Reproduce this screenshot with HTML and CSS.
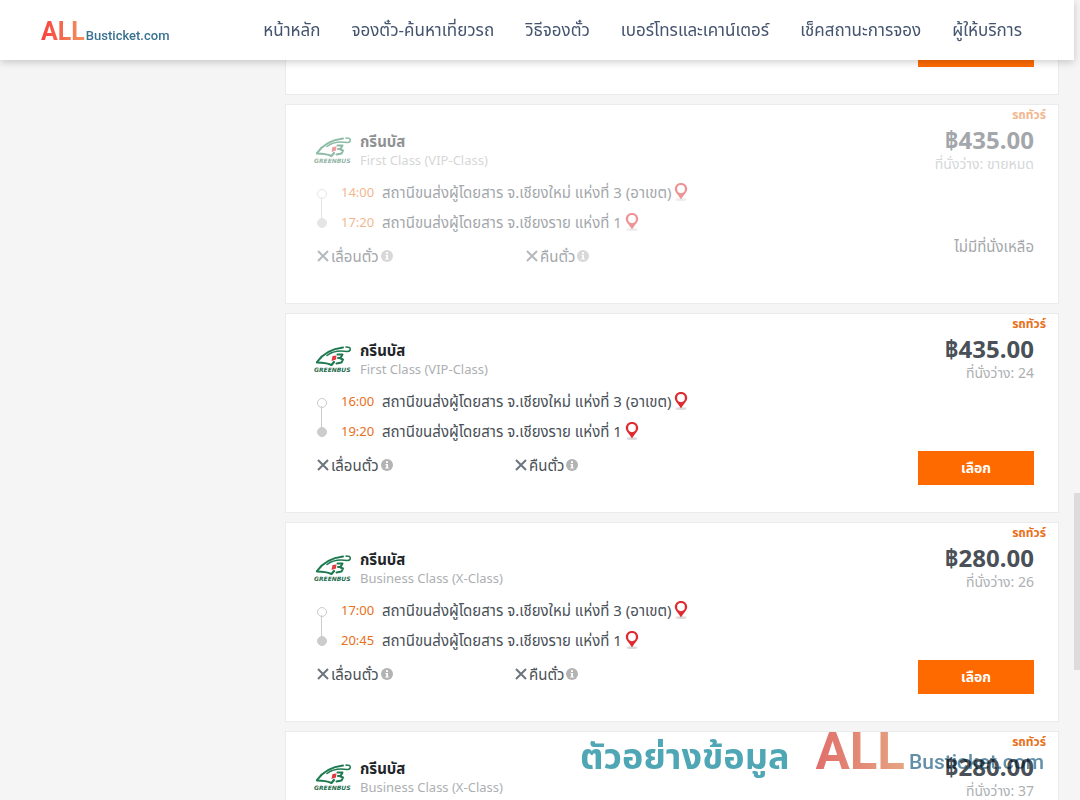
FILE: index.html
```html
<!DOCTYPE html>
<html lang="th">

<head>
    <meta charset="UTF-8">
    <meta name="viewport" content="width=device-width, initial-scale=1.0">
    <title>ALL Busticket.com</title>
    <link rel="stylesheet" href="styles.css">
</head>

<body>

    <!-- shared icons -->
    <svg class="sprite" aria-hidden="true">
        <symbol id="greenbus" viewBox="0 0 38 28">
            <g fill="none" stroke="#1d7a50" stroke-linecap="round" stroke-linejoin="round">
                <path stroke-width="2" d="M3 17C8 10 16 4 29 2.500"/>
                <path stroke-width="2.200" d="M3 17.500C8 17.500 13 18 17.500 20L20 17"/>
                <path stroke-width="1.600" d="M13 10.500C18 6.500 26 5.500 33 6.500C36.500 6.500 37 4 35.500 2.500L32 2"/>
                <path stroke-width="2" d="M23.500 9.500H28.500L26.500 13H24M26.500 13.500L29 14.500L27.500 17.500L22.500 18.500"/>
            </g>
            <path fill="#e23a3f" d="M18.500 11L22.500 10.500L22 14.500L17.500 16Z"/>
            <text x="0" y="27" class="greenbus-text">GREENBUS</text>
        </symbol>
        <symbol id="pin" viewBox="0 0 14 18">
            <ellipse cx="7" cy="16.500" rx="5.500" ry="1.500" fill="#ddd"/>
            <path fill="#df2a2f" fill-rule="evenodd" d="M7 0C3.200 0 .8 2.700 .8 6C.8 9.500 5 12.500 7 16.500C9 12.500 13.200 9.500 13.200 6C13.200 2.700 10.800 0 7 0ZM7 2A3.900 4.100 0 1 1 7 10.200A3.900 4.100 0 1 1 7 2Z"/>
        </symbol>
        <symbol id="cross" viewBox="0 0 12 12">
            <path d="M1 1L11 11M11 1L1 11" stroke="#6c757d" stroke-width="2"/>
        </symbol>
        <symbol id="info" viewBox="0 0 12 12">
            <circle cx="6" cy="6" r="6" fill="#b3b3b3"/>
            <path d="M5 2.200H7V4H5ZM4.500 5H7V8.500H7.800V9.600H4.300V8.500H5.200V6H4.500Z" fill="#fff"/>
        </symbol>
    </svg>

    <header class="header">
        <a class="logo" href="#"><span class="logo-all">ALL</span><span class="logo-name">Busticket.com</span></a>
        <nav class="nav">
            <a href="#">หน้าหลัก</a>
            <a href="#">จองตั๋ว-ค้นหาเที่ยวรถ</a>
            <a href="#">วิธีจองตั๋ว</a>
            <a href="#">เบอร์โทรและเคาน์เตอร์</a>
            <a href="#">เช็คสถานะการจอง</a>
            <a href="#">ผู้ให้บริการ</a>
        </nav>
    </header>

    <main class="results">
        <article class="card card-end">
            <button type="button" class="select">เลือก</button>
        </article>

        <article class="card sold-out">
            <div class="trip">
                <div class="company">
                    <svg class="company-logo"><use href="#greenbus"/></svg>
                    <div>
                        <h2>กรีนบัส</h2>
                        <p class="class">First Class (VIP-Class)</p>
                    </div>
                </div>
                <ul class="stops">
                    <li><span class="time">14:00</span>สถานีขนส่งผู้โดยสาร จ.เชียงใหม่ แห่งที่ 3 (อาเขต)<svg class="pin"><use href="#pin"/></svg></li>
                    <li><span class="time">17:20</span>สถานีขนส่งผู้โดยสาร จ.เชียงราย แห่งที่ 1<svg class="pin"><use href="#pin"/></svg></li>
                </ul>
                <div class="options">
                    <span class="option"><svg><use href="#cross"/></svg>เลื่อนตั๋ว<svg><use href="#info"/></svg></span>
                    <span class="option"><svg><use href="#cross"/></svg>คืนตั๋ว<svg><use href="#info"/></svg></span>
                </div>
            </div>
            <div class="booking">
                <span class="type">รถทัวร์</span>
                <strong class="price">฿435.00</strong>
                <span class="seats">ที่นั่งว่าง: ขายหมด</span>
                <span class="no-seats">ไม่มีที่นั่งเหลือ</span>
            </div>
        </article>

        <article class="card">
            <div class="trip">
                <div class="company">
                    <svg class="company-logo"><use href="#greenbus"/></svg>
                    <div>
                        <h2>กรีนบัส</h2>
                        <p class="class">First Class (VIP-Class)</p>
                    </div>
                </div>
                <ul class="stops">
                    <li><span class="time">16:00</span>สถานีขนส่งผู้โดยสาร จ.เชียงใหม่ แห่งที่ 3 (อาเขต)<svg class="pin"><use href="#pin"/></svg></li>
                    <li><span class="time">19:20</span>สถานีขนส่งผู้โดยสาร จ.เชียงราย แห่งที่ 1<svg class="pin"><use href="#pin"/></svg></li>
                </ul>
                <div class="options">
                    <span class="option"><svg><use href="#cross"/></svg>เลื่อนตั๋ว<svg><use href="#info"/></svg></span>
                    <span class="option"><svg><use href="#cross"/></svg>คืนตั๋ว<svg><use href="#info"/></svg></span>
                </div>
            </div>
            <div class="booking">
                <span class="type">รถทัวร์</span>
                <strong class="price">฿435.00</strong>
                <span class="seats">ที่นั่งว่าง: 24</span>
                <button type="button" class="select">เลือก</button>
            </div>
        </article>

        <article class="card">
            <div class="trip">
                <div class="company">
                    <svg class="company-logo"><use href="#greenbus"/></svg>
                    <div>
                        <h2>กรีนบัส</h2>
                        <p class="class">Business Class (X-Class)</p>
                    </div>
                </div>
                <ul class="stops">
                    <li><span class="time">17:00</span>สถานีขนส่งผู้โดยสาร จ.เชียงใหม่ แห่งที่ 3 (อาเขต)<svg class="pin"><use href="#pin"/></svg></li>
                    <li><span class="time">20:45</span>สถานีขนส่งผู้โดยสาร จ.เชียงราย แห่งที่ 1<svg class="pin"><use href="#pin"/></svg></li>
                </ul>
                <div class="options">
                    <span class="option"><svg><use href="#cross"/></svg>เลื่อนตั๋ว<svg><use href="#info"/></svg></span>
                    <span class="option"><svg><use href="#cross"/></svg>คืนตั๋ว<svg><use href="#info"/></svg></span>
                </div>
            </div>
            <div class="booking">
                <span class="type">รถทัวร์</span>
                <strong class="price">฿280.00</strong>
                <span class="seats">ที่นั่งว่าง: 26</span>
                <button type="button" class="select">เลือก</button>
            </div>
        </article>

        <article class="card">
            <div class="trip">
                <div class="company">
                    <svg class="company-logo"><use href="#greenbus"/></svg>
                    <div>
                        <h2>กรีนบัส</h2>
                        <p class="class">Business Class (X-Class)</p>
                    </div>
                </div>
            </div>
            <div class="booking">
                <span class="type">รถทัวร์</span>
                <strong class="price">฿280.00</strong>
                <span class="seats">ที่นั่งว่าง: 37</span>
            </div>
        </article>
    </main>

    <div class="watermark">
        <span class="watermark-text">ตัวอย่างข้อมูล</span>
        <span class="logo-all">ALL</span>
        <span class="logo-name">Busticket.com</span>
    </div>

    <div class="scroll-thumb"></div>

</body>

</html>
```
FILE: styles.css
```css
* {
    box-sizing: border-box;
}

body {
    margin: 0;
    height: 100vh;
    overflow: hidden;
    padding-right: 6px;
    font-family: "Noto Sans", "Noto Sans Thai", sans-serif;
    font-size: 15px;
    line-height: 20px;
    color: #495057;
    background-color: #f5f5f5;
}

h2,
p,
ul {
    margin: 0;
    padding: 0;
}

.sprite {
    display: none;
}

/* header */
.header {
    position: fixed;
    top: 0;
    left: 0;
    right: 6px;
    z-index: 10;
    display: flex;
    align-items: center;
    justify-content: space-between;
    height: 60px;
    padding: 0 52px 0 41px;
    background-color: #fff;
    box-shadow: 0 2px 8px rgba(0, 0, 0, 0.2);
}

.logo {
    display: flex;
    align-items: baseline;
    gap: 1px;
    padding-top: 3px;
    font-family: Roboto, sans-serif;
    font-weight: bold;
    text-decoration: none;
}

.logo-all {
    font-size: 25px;
    line-height: 30px;
    color: transparent;
    background: linear-gradient(90deg, #f8423c, #f29460);
    background-clip: text;
    -webkit-background-clip: text;
}

.logo-name {
    font-size: 13px;
    font-weight: 500;
    color: #3a7291;
}

.nav {
    display: flex;
    gap: 31px;
}

.nav a {
    font-size: 17px;
    color: #44546f;
    text-decoration: none;
    white-space: nowrap;
}

/* results */
.results {
    display: flex;
    flex-direction: column;
    gap: 9px;
    padding: 32px 15px 0 285px;
}

.card {
    display: flex;
    justify-content: space-between;
    min-height: 200px;
    padding: 0 24px 0 28px;
    background-color: #fff;
    border: 1px solid #e9ebec;
    flex-shrink: 0;
}

.card-end {
    justify-content: flex-end;
    min-height: 0;
    padding-bottom: 27px;
}

.trip {
    padding-top: 26px;
}

.company {
    display: flex;
    align-items: center;
    gap: 8px;
}

.company-logo {
    width: 38px;
    height: 28px;
}

.greenbus-text {
    font: italic bold 6px "DejaVu Sans", sans-serif;
    fill: #1d6b4a;
}

.company h2 {
    font-size: 15px;
    line-height: 20px;
    color: #212529;
}

.class {
    font-size: 13px;
    line-height: 18px;
    color: #adb0b3;
}

.seats {
    font-size: 14px;
    line-height: 18px;
    color: #adb0b3;
}

.stops {
    position: relative;
    margin-top: 8px;
    list-style: none;
}

/* line between the two stops */
.stops::before {
    content: "";
    position: absolute;
    top: 20px;
    left: 7px;
    height: 24px;
    border-left: 1px solid #ccc;
}

.stops li {
    display: flex;
    align-items: center;
    height: 30px;
    white-space: nowrap;
}

.stops li::before {
    content: "";
    width: 8px;
    height: 8px;
    margin: 4px 14px 0 3px;
    border: 1px solid #ccc;
    border-radius: 50%;
}

.stops li:last-child::before {
    margin-top: 2px;
    background-color: #ccc;
}

.time {
    width: 41px;
    font-size: 13px;
    color: #e8701a;
}

.pin {
    width: 14px;
    height: 18px;
    margin-left: 3px;
}

.options {
    display: flex;
    margin-top: 9px;
    padding-left: 3px;
}

.option {
    display: flex;
    align-items: center;
    gap: 2px;
    width: 198px;
}

.option svg {
    width: 12px;
    height: 12px;
}

.booking {
    display: flex;
    flex-direction: column;
    align-items: flex-end;
}

.type {
    margin-right: -12px;
    font-size: 12px;
    line-height: 20px;
    font-weight: bold;
    color: #e8701a;
}

.price {
    font-size: 24px;
    line-height: 30px;
}

.select {
    width: 116px;
    height: 34px;
    padding: 0;
    font: inherit;
    font-size: 14px;
    font-weight: bold;
    color: #fff;
    background-color: #ff6a00;
    border: 0;
}

.booking .select {
    margin-top: 69px;
}

.no-seats {
    margin-top: 63px;
}

.sold-out > div {
    opacity: 0.5;
}

.sold-out .option {
    width: 209px;
}

/* watermark over the page corner */
.watermark {
    position: fixed;
    right: 36px;
    bottom: 18px;
    display: flex;
    align-items: baseline;
    opacity: 0.8;
    mix-blend-mode: multiply;
    font-family: Roboto, sans-serif;
    font-weight: bold;
    pointer-events: none;
}

.watermark-text {
    margin-right: 26px;
    font-family: "Noto Sans", "Noto Sans Thai", sans-serif;
    font-size: 36px;
    color: #2390a2;
}

.watermark .logo-all {
    margin-right: 4px;
    font-size: 51px;
    line-height: 60px;
    background-image: linear-gradient(90deg, #da4a45, #df8f62);
}

.watermark .logo-name {
    font-size: 21px;
}

/* thin page scrollbar */
.scroll-thumb {
    position: fixed;
    top: 493px;
    right: 0;
    width: 6px;
    height: 177px;
    background-color: #dcdcdc;
}
```
